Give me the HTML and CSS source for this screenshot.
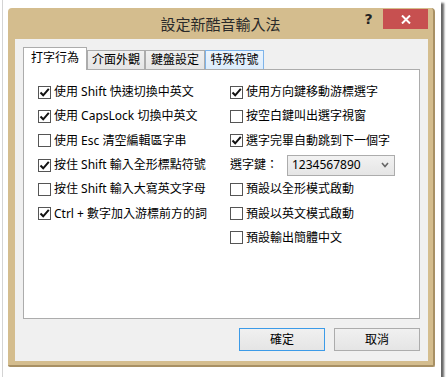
FILE: index.html
```html
<!DOCTYPE html>
<html lang="zh-Hant">
<head>
<meta charset="utf-8">
<title>設定新酷音輸入法</title>
<link rel="stylesheet" href="styles.css">
</head>
<body>
<div class="paper">
  <div class="window">
    <div class="titlebar">
      <div class="title">設定新酷音輸入法</div>
      <div class="ctrls">
        <div class="help">?</div>
        <div class="close">
          <svg width="10" height="9" viewBox="0 0 10 9"><path d="M1 0.5 L9 8.5 M9 0.5 L1 8.5" stroke="#fff" stroke-width="2" fill="none"/></svg>
        </div>
      </div>
    </div>
    <div class="client">
      <div class="tabs">
        <div class="tab active">打字行為</div>
        <div class="tab w58">介面外觀</div>
        <div class="tab w60">鍵盤設定</div>
        <div class="tab w59 hover">特殊符號</div>
      </div>
      <div class="panel">
        <div class="col left">
          <div class="opt"><span class="cb on"><svg width="11" height="11" viewBox="0 0 11 11"><path d="M1.5 5.5 L4.2 8.3 L9.8 1.8" stroke="#111" stroke-width="2" fill="none"/></svg></span><span>使用 Shift 快速切換中英文</span></div>
          <div class="opt"><span class="cb on"><svg width="11" height="11" viewBox="0 0 11 11"><path d="M1.5 5.5 L4.2 8.3 L9.8 1.8" stroke="#111" stroke-width="2" fill="none"/></svg></span><span>使用 CapsLock 切換中英文</span></div>
          <div class="opt"><span class="cb"></span><span>使用 Esc 清空編輯區字串</span></div>
          <div class="opt"><span class="cb on"><svg width="11" height="11" viewBox="0 0 11 11"><path d="M1.5 5.5 L4.2 8.3 L9.8 1.8" stroke="#111" stroke-width="2" fill="none"/></svg></span><span>按住 Shift 輸入全形標點符號</span></div>
          <div class="opt"><span class="cb"></span><span>按住 Shift 輸入大寫英文字母</span></div>
          <div class="opt"><span class="cb on"><svg width="11" height="11" viewBox="0 0 11 11"><path d="M1.5 5.5 L4.2 8.3 L9.8 1.8" stroke="#111" stroke-width="2" fill="none"/></svg></span><span>Ctrl + 數字加入游標前方的詞</span></div>
        </div>
        <div class="col right">
          <div class="opt"><span class="cb on"><svg width="11" height="11" viewBox="0 0 11 11"><path d="M1.5 5.5 L4.2 8.3 L9.8 1.8" stroke="#111" stroke-width="2" fill="none"/></svg></span><span>使用方向鍵移動游標選字</span></div>
          <div class="opt"><span class="cb"></span><span>按空白鍵叫出選字視窗</span></div>
          <div class="opt"><span class="cb on"><svg width="11" height="11" viewBox="0 0 11 11"><path d="M1.5 5.5 L4.2 8.3 L9.8 1.8" stroke="#111" stroke-width="2" fill="none"/></svg></span><span>選字完畢自動跳到下一個字</span></div>
          <div class="opt sel"><span class="lbl">選字鍵：</span>
            <div class="select"><span>1234567890</span>
              <svg width="8" height="6" viewBox="0 0 8 6"><path d="M1 1 L4 4.5 L7 1" stroke="#666" stroke-width="1.6" fill="none"/></svg>
            </div>
          </div>
          <div class="opt"><span class="cb"></span><span>預設以全形模式啟動</span></div>
          <div class="opt"><span class="cb"></span><span>預設以英文模式啟動</span></div>
          <div class="opt"><span class="cb"></span><span>預設輸出簡體中文</span></div>
        </div>
      </div>
      <div class="buttons">
        <div class="btn default">確定</div>
        <div class="btn">取消</div>
      </div>
    </div>
  </div>
</div>
</body>
</html>
```
FILE: styles.css
```css
* { box-sizing: border-box; }
body {
  margin: 0;
  background: #fff;
  font-family: "Noto Sans", "Noto Sans CJK TC", sans-serif;
  font-size: 12px;
  color: #000;
}
.paper {
  margin-left: 2px;
  width: 439px;
  height: 377px;
  background: #fff;
  border-left: 1px solid #d4d4d4;
  box-shadow: 3px 3px 2px rgba(0,0,0,0.6);
  padding: 8px 6px 10px 5px;
}
.window {
  width: 427px;
  height: 359px;
  background: #d4bd8e;
  border-radius: 4px 4px 2px 2px;
  border-right: 2px solid #a89064;
  border-bottom: 2px solid #a89064;
  display: flex;
  flex-direction: column;
}
.titlebar {
  height: 31px;
  display: grid;
  grid-template-columns: 1fr auto 1fr;
}
.title {
  grid-column: 2;
  align-self: center;
  font-size: 15px;
  line-height: 18px;
  color: #2a2a2a;
  padding-top: 1px;
}
.ctrls {
  grid-column: 3;
  justify-self: end;
  align-self: start;
  display: flex;
  margin-top: 1px;
  margin-right: 5px;
}
.help {
  width: 29px;
  height: 20px;
  display: flex;
  align-items: center;
  justify-content: center;
  font-family: "DejaVu Sans", sans-serif;
  font-weight: bold;
  font-size: 14px;
  color: #222;
}
.close {
  width: 45px;
  height: 20px;
  background: #c75050;
  display: flex;
  align-items: center;
  justify-content: center;
}
.client {
  flex: 1;
  margin: 0 5px 4px 7px;
  background: #f0f0f0;
  padding: 8px 8px 10px 8px;
  display: flex;
  flex-direction: column;
}
.tabs {
  display: flex;
  align-items: flex-end;
  height: 23px;
  margin-bottom: -1px;
  position: relative;
  z-index: 1;
}
.tab {
  height: 19px;
  margin-bottom: 1px;
  border: 1px solid #acacac;
  border-bottom: none;
  background: linear-gradient(#f0f0f0, #e5e5e5);
  display: flex;
  align-items: center;
  justify-content: center;
  line-height: 14px;
  white-space: nowrap;
}
.tab.active {
  width: 64px;
  height: 23px;
  margin-bottom: 0;
  background: #fff;
  padding-bottom: 2px;
}
.tab.w58 { width: 58px; }
.tab.w60 { width: 60px; }
.tab.w59 { width: 59px; }
.tab.hover {
  border-color: #7eb4ea;
  background: linear-gradient(#ecf4fc, #dcecfc);
}
.panel {
  height: 250px;
  border: 1px solid #acacac;
  background: #fff;
  display: flex;
  padding: 10px 0 0 14px;
}
.col.left { width: 192px; }
.opt {
  height: 24.3px;
  display: flex;
  align-items: center;
  gap: 3px;
  white-space: nowrap;
  line-height: 16px;
}
.cb {
  width: 13px;
  height: 13px;
  flex: none;
  border: 1px solid #555;
  background: #fff;
  display: flex;
  align-items: center;
  justify-content: center;
}
.lbl { width: 54px; }
.select {
  width: 108px;
  height: 21px;
  border: 1px solid #acacac;
  background: linear-gradient(#f2f2f2, #e5e5e5);
  display: flex;
  align-items: center;
  justify-content: space-between;
  padding: 0 5px 0 4px;
}
.buttons {
  display: flex;
  justify-content: flex-end;
  gap: 9px;
  margin-top: 9px;
}
.btn {
  width: 86px;
  height: 23px;
  border: 1px solid #acacac;
  background: linear-gradient(#f0f0f0, #e5e5e5);
  display: flex;
  align-items: center;
  justify-content: center;
  line-height: 14px;
}
.btn.default { border-color: #3c9be8; }
```
